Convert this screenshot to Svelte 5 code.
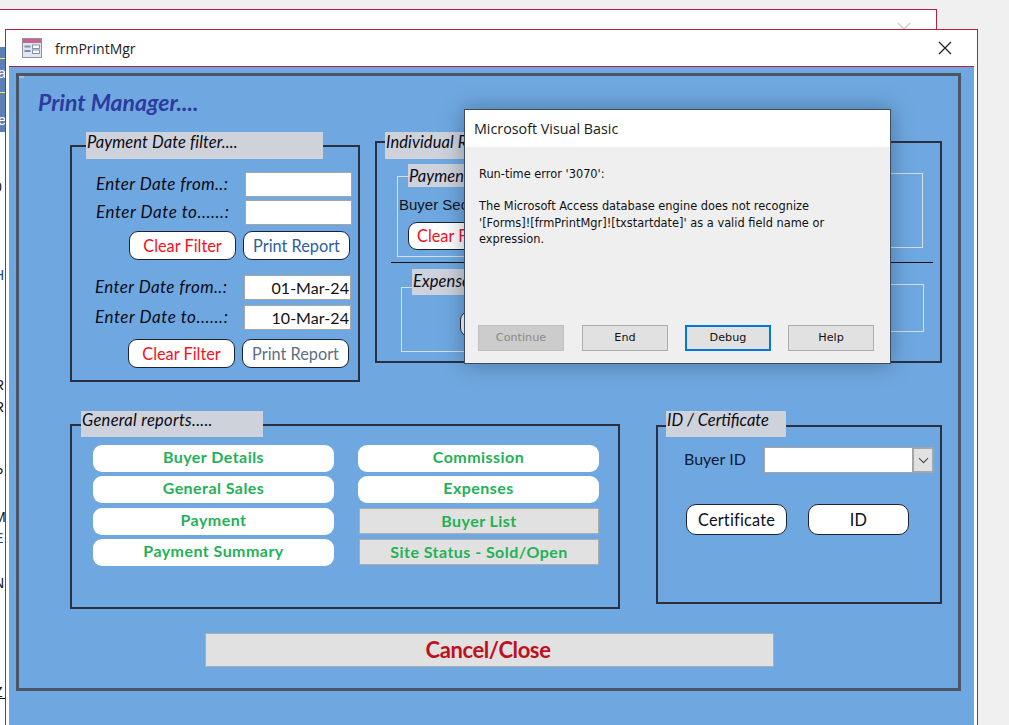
<script>
  const leftReports = ['Buyer Details', 'General Sales', 'Payment', 'Payment Summary'];
  const sliver = [
    { t: '0', y: 168, c: '#111' },
    { t: 'H', y: 256, c: '#1a4a80' },
    { t: 'R', y: 366, c: '#111' },
    { t: 'R', y: 388, c: '#111' },
    { t: 'P', y: 454, c: '#111' },
    { t: 'M', y: 498, c: '#111' },
    { t: 'E', y: 519, c: '#1a4a80' },
    { t: 'N', y: 564, c: '#111' },
    { t: 'Z', y: 673, c: '#111' }
  ];
</script>

<div class="desktop">
  <section class="back-window">
    <svg class="back-x" width="14" height="14" viewBox="0 0 14 14"><path d="M1 1 13 13M13 1 1 13" stroke="#c9c9c9" stroke-width="1.3" fill="none" /></svg>
    <div class="nav-strip"><span class="nav-a">a</span><span class="nav-e">e</span></div>
    {#each sliver as s}
      <span class="sliver" style="top:{s.y}px;color:{s.c}">{s.t}</span>
    {/each}
    <span class="z-rule"></span>
  </section>

  <section class="front-window">
    <header class="titlebar">
      <svg class="form-icon" width="20" height="20" viewBox="0 0 20 20">
        <rect x="0.5" y="0.5" width="19" height="19" fill="#dfe6f2" stroke="#8d93a5" />
        <rect x="1" y="1" width="18" height="4" fill="#c9648a" />
        <rect x="2.5" y="7.5" width="6" height="2" fill="#7f8ea8" />
        <rect x="2.5" y="12" width="6" height="2" fill="#7f8ea8" />
        <rect x="10.5" y="7" width="7" height="3.5" fill="#fff" stroke="#6b7a96" stroke-width="0.8" />
        <rect x="10.5" y="12" width="7" height="3.5" fill="#fff" stroke="#6b7a96" stroke-width="0.8" />
      </svg>
      <span class="form-title">frmPrintMgr</span>
      <svg class="close" width="14" height="14" viewBox="0 0 14 14"><path d="M1 1 13 13M13 1 1 13" stroke="#222" stroke-width="1.3" fill="none" /></svg>
    </header>

    <div class="form-body">
      <div class="frame">
        <span class="corner"></span>
        <h1 class="heading">Print Manager....</h1>

        <div class="row-top">
          <fieldset class="group g-date">
            <div class="legend l-date">Payment Date filter....</div>
            <div class="date-row r1"><span class="lbl">Enter Date from..:</span><span class="field"></span></div>
            <div class="date-row r2"><span class="lbl wide">Enter Date to......:</span><span class="field"></span></div>
            <div class="btn-row r3">
              <span class="pill red">Clear Filter</span>
              <span class="pill navy">Print Report</span>
            </div>
            <div class="shifted">
              <div class="date-row r4"><span class="lbl">Enter Date from..:</span><span class="field val">01-Mar-24</span></div>
              <div class="date-row r5"><span class="lbl wide">Enter Date to......:</span><span class="field val">10-Mar-24</span></div>
              <div class="btn-row r6">
                <span class="pill red">Clear Filter</span>
                <span class="pill slate">Print Report</span>
              </div>
            </div>
          </fieldset>

          <fieldset class="group g-indiv">
            <div class="legend l-indiv">Individual Reports....</div>
            <div class="sub sub-pay-left">
              <div class="legend l-pay">Payment....</div>
              <div class="buyer-sec">Buyer Section</div>
              <span class="pill red clear-pay">Clear Filter</span>
            </div>
            <div class="sub sub-pay-right"></div>
            <div class="divider"></div>
            <div class="sub sub-exp-left">
              <div class="legend l-exp">Expenses....</div>
              <span class="pill exp-btn"></span>
            </div>
            <div class="sub sub-exp-right"></div>
          </fieldset>
        </div>

        <div class="row-bottom">
          <fieldset class="group g-general">
            <div class="legend l-general">General reports.....</div>
            <div class="reports">
              <div class="col">
                {#each leftReports as r}
                  <span class="report">{r}</span>
                {/each}
              </div>
              <div class="col col-right">
                <span class="report">Commission</span>
                <span class="report">Expenses</span>
                <span class="report flat f1">Buyer List</span>
                <span class="report flat f2">Site Status - Sold/Open</span>
              </div>
            </div>
          </fieldset>

          <fieldset class="group g-id">
            <div class="legend l-id">ID / Certificate</div>
            <div class="buyer-row">
              <span class="buyer-label">Buyer ID</span>
              <div class="combo">
                <span class="combo-text"></span>
                <span class="combo-btn">
                  <svg width="11" height="7" viewBox="0 0 11 7"><path d="M1 1.2 5.5 5.7 10 1.2" stroke="#4a4a4a" stroke-width="1.1" fill="none" /></svg>
                </span>
              </div>
            </div>
            <div class="id-buttons">
              <span class="pill dark">Certificate</span>
              <span class="pill dark">ID</span>
            </div>
          </fieldset>
        </div>

        <div class="cancel">Cancel/Close</div>
      </div>
    </div>
  </section>

  <section class="dialog">
    <div class="dlg-title">Microsoft Visual Basic</div>
    <div class="dlg-body">
      <p class="err">Run-time error '3070':</p>
      <p class="msg">The Microsoft Access database engine does not recognize<br />'[Forms]![frmPrintMgr]![txstartdate]' as a valid field name or<br />expression.</p>
      <div class="dlg-buttons">
        <span class="dlg-btn off">Continue</span>
        <span class="dlg-btn end">End</span>
        <span class="dlg-btn focus">Debug</span>
        <span class="dlg-btn">Help</span>
      </div>
    </div>
  </section>
</div>

<style>
  :global(body) { margin: 0; background: #f0f0f0; }
  .desktop { position: relative; width: 1009px; height: 725px; overflow: hidden; background: #f0f0f0; font-family: Lato, "Liberation Sans", sans-serif; }

  /* windows on the desktop */
  .back-window { position: absolute; left: -2px; top: 9px; width: 939px; height: 730px; box-sizing: border-box; background: #fff; border: 1px solid #b3243a; overflow: hidden; }
  .back-x { position: absolute; left: 898px; top: 12px; }
  .nav-strip { position: absolute; left: 0; top: 37px; width: 8px; height: 85px; background: #5b80b8; }
  .nav-strip::before { content: ""; position: absolute; left: 0; right: 0; top: 11px; height: 1px; background: #f0ef50; }
  .nav-strip::after { content: ""; position: absolute; left: 0; right: 0; top: 45px; height: 1px; background: #f0ef50; }
  .nav-a, .nav-e { position: absolute; right: 1px; color: #fff; font: 15px "Liberation Sans", sans-serif; }
  .nav-a { top: 17px; }
  .nav-e { top: 64px; }
  .sliver { position: absolute; left: -5px; font: 14px/18px "Liberation Sans", sans-serif; }
  .z-rule { position: absolute; left: 0; top: 688px; width: 8px; height: 1px; background: #111; }

  .front-window { position: absolute; left: 5px; top: 29px; width: 973px; height: 720px; box-sizing: border-box; background: #fff; border: 1px solid #b3243a; display: flex; flex-direction: column; padding: 0 3px 0 3px; }
  .titlebar { height: 36px; flex: none; display: flex; align-items: center; border-bottom: 1px solid #b3243a; padding-left: 13px; }
  .form-icon { flex: none; margin-top: -1px; }
  .form-title { margin-left: 13px; font: 14px "Open Sans", sans-serif; color: #222; }
  .close { margin-left: auto; margin-right: 22px; }

  .form-body { flex: 1; background: #6fa8e0; padding: 6px 13px 0 7px; }
  .frame { position: relative; box-sizing: border-box; height: 618px; border: 3px solid #4d5464; }
  .corner { position: absolute; left: 0; top: 0; width: 5px; height: 2px; background: #b5bfcc; }
  .heading { margin: 0; padding: 12px 0 0 19px; height: 41px; box-sizing: border-box; font: italic 700 23px/28px Lato, sans-serif; color: #2d3a9e; }

  .row-top { display: flex; align-items: flex-start; padding: 28px 0 0 51px; }
  .row-bottom { display: flex; align-items: flex-start; padding: 42px 0 0 51px; }

  .group { position: relative; margin: 0; padding: 0; min-width: 0; box-sizing: border-box; border: 2px solid #2b2f3e; }
  .legend { position: absolute; box-sizing: border-box; background: #ced2db; color: #0a0a14; font: italic 400 16.5px/20px Lato, sans-serif; padding: 0 0 0 1px; white-space: nowrap; overflow: hidden; letter-spacing: 0.1px; }

  .g-date { width: 290px; height: 237px; flex: none; }
  .l-date { left: 14px; top: -15px; width: 237px; height: 27px; }
  .date-row { display: flex; align-items: center; justify-content: space-between; padding: 0 6px 0 24px; height: 25px; }
  .r1 { margin-top: 25px; }
  .r2 { margin-top: 3px; }
  .lbl { font: italic 400 17px/20px Lato, sans-serif; letter-spacing: 0.4px; color: #0a0a14; margin-bottom: 2px; }
  .wide { letter-spacing: 0.55px; }
  .field { width: 107px; height: 25px; box-sizing: border-box; background: #fff; border: 1px solid #a6a6a6; }
  .val { font: 400 16px/23px Lato, sans-serif; color: #111; text-align: right; padding-right: 1px; letter-spacing: 0.05px; }
  .btn-row { display: flex; gap: 7px; padding-left: 57px; }
  .r3 { margin-top: 6px; }
  .shifted { margin-left: -1px; }
  .shifted .date-row { padding-right: 7px; }
  .r4 { margin-top: 15px; }
  .r5 { margin-top: 5px; }
  .r6 { margin-top: 9px; }
  .pill { display: flex; align-items: center; justify-content: center; box-sizing: border-box; width: 107px; height: 29px; background: #fff; border: 1px solid #1d2230; border-radius: 9px; font: 400 16.3px/20px Lato, sans-serif; }
  .red { color: #f4101c; }
  .navy { color: #2c5f9c; }
  .slate { color: #5f6f82; }
  .dark { color: #0b1020; width: 101px; height: 31px; border-radius: 10px; letter-spacing: 0.2px; }

  .g-indiv { width: 567px; height: 222px; flex: none; margin: -4px 0 0 15px; }
  .l-indiv { left: 8px; top: -11px; width: 300px; height: 27px; line-height: 21px; }
  .sub { position: absolute; box-sizing: border-box; border: 1px solid #d9dee4; }
  .sub-pay-left { left: 20px; top: 33px; width: 90px; height: 81px; border-right: 0; }
  .sub-pay-right { left: 420px; top: 30px; width: 126px; height: 75px; border-left: 0; }
  .l-pay { left: 10px; top: -13px; width: 150px; height: 23px; line-height: 24px; }
  .buyer-sec { position: absolute; left: 1px; top: 18px; font: 15px/20px "Liberation Sans", sans-serif; color: #10141f; white-space: nowrap; }
  .clear-pay { position: absolute; left: 10px; top: 45px; height: 28px; justify-content: flex-start; padding-left: 8px; }
  .divider { position: absolute; left: 14px; top: 119px; width: 542px; height: 1px; background: #111; }
  .sub-exp-left { left: 24px; top: 144px; width: 90px; height: 65px; border-right: 0; }
  .sub-exp-right { left: 420px; top: 141px; width: 127px; height: 48px; border-left: 0; }
  .l-exp { left: 10px; top: -19px; width: 150px; height: 26px; line-height: 24px; }
  .exp-btn { position: absolute; left: 58px; top: 23px; height: 26px; }

  .g-general { width: 550px; height: 185px; flex: none; }
  .l-general { left: 9px; top: -15px; width: 182px; height: 26px; line-height: 18px; letter-spacing: 0.3px; }
  .reports { display: flex; gap: 24px; padding: 19px 0 0 21px; }
  .col { display: flex; flex-direction: column; width: 241px; gap: 4px; }
  .col > .report:nth-child(3) { margin-top: 1px; }
  .report { display: flex; align-items: center; justify-content: center; box-sizing: border-box; height: 27px; padding-bottom: 3px; background: #fff; border-radius: 9px; color: #1fb256; font: 700 16px/20px Lato, sans-serif; letter-spacing: 0.45px; }
  .col > .flat { height: 26px; margin-left: 1px; padding-bottom: 1px; background: #e1e1e1; border: 1px solid #adadad; border-radius: 0; }
  .col > .f1 { margin-top: 2px; }
  .col > .f2 { margin-top: 1px; }

  .g-id { width: 286px; height: 179px; flex: none; margin: 1px 0 0 36px; }
  .l-id { left: 8px; top: -16px; width: 120px; height: 26px; line-height: 19px; letter-spacing: 0; }
  .buyer-row { display: flex; align-items: center; padding: 20px 0 0 26px; }
  .buyer-label { width: 80px; margin-bottom: 3px; font: 400 16px/20px Lato, sans-serif; color: #0c1a36; }
  .combo { display: flex; width: 170px; height: 26px; margin-right: -8px; flex: none; box-sizing: border-box; border: 1px solid #a6a6a6; background: #fff; }
  .combo-text { flex: 1; }
  .combo-btn { width: 22px; margin: -1px -1px -1px 0; display: flex; align-items: center; justify-content: center; background: #e1e1e1; border: 2px solid #a6a6a6; box-sizing: border-box; }
  .id-buttons { display: flex; gap: 21px; padding: 31px 0 0 28px; }

  .cancel { display: flex; align-items: center; justify-content: center; box-sizing: border-box; width: 569px; height: 34px; margin: 24px 0 0 186px; background: #e1e1e1; border: 1px solid #adadad; color: #bd1020; font: 700 22px/30px Lato, sans-serif; letter-spacing: -0.4px; padding-right: 3px; }

  /* modal over the form */
  .dialog { position: absolute; left: 464px; top: 109px; width: 427px; height: 255px; box-sizing: border-box; border: 1px solid #3f4c5c; background: #efefef; box-shadow: 0 0 22px rgba(20, 40, 70, 0.4); display: flex; flex-direction: column; }
  .dlg-title { height: 37px; flex: none; background: #fff; padding-left: 9px; font: 14.3px/37px "Open Sans", sans-serif; color: #1a1a1a; }
  .dlg-body { flex: 1; position: relative; padding: 19px 14px 0 14px; font: 11.4px/16.3px "DejaVu Sans", sans-serif; color: #111; }
  .err { margin: 0; }
  .msg { margin: 16px 0 0; }
  .dlg-buttons { position: absolute; left: 13px; top: 178px; display: flex; gap: 17px; font-size: 11.2px; }
  .dlg-btn { display: flex; align-items: center; justify-content: center; box-sizing: border-box; width: 86px; height: 26px; background: #e1e1e1; border: 1px solid #adadad; }
  .end { margin-left: 1px; }
  .off { background: #cccccc; border-color: #bfbfbf; color: #8a8a8a; }
  .focus { border: 2px solid #0078d7; }
</style>
